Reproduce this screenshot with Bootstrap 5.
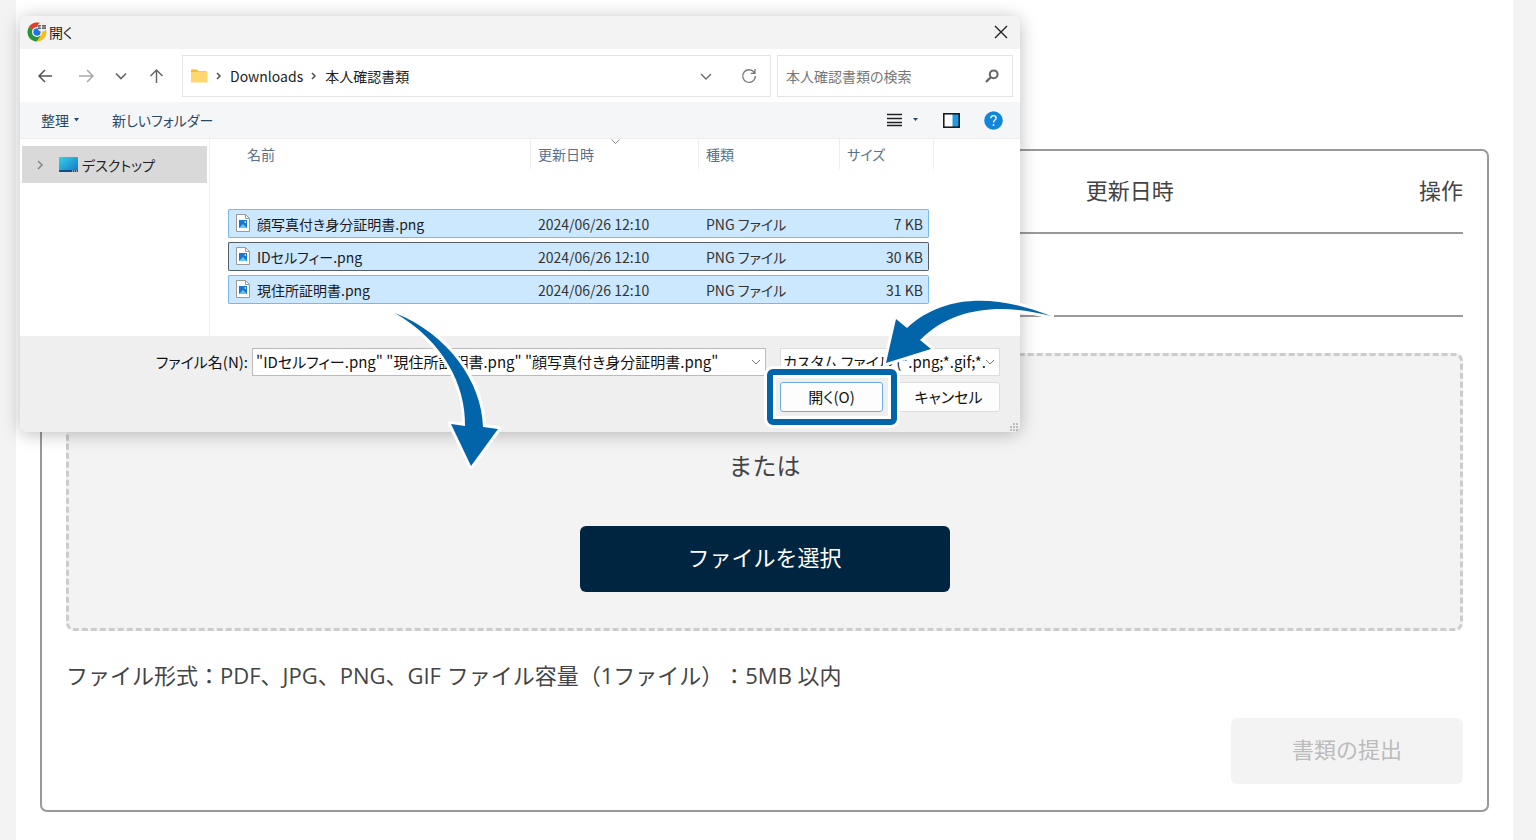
<!DOCTYPE html>
<html lang="ja">
<head>
<meta charset="utf-8">
<meta name="viewport" content="width=device-width, initial-scale=1">
<title>書類の提出</title>
<link href="https://cdn.jsdelivr.net/npm/bootstrap@5.3.0/dist/css/bootstrap.min.css" rel="stylesheet">
<style>
  body { background: #f3f3f3; color: #444; font-family: "Open Sans", "Noto Sans CJK JP", sans-serif; font-size: 22px; line-height: 32px; text-spacing-trim: space-all; }
  .page { background: #fff; margin: 0 23px 0 16px; padding: 149px 24px 28px 24px; min-height: 100vh; }
  .panel { border: 2px solid #999; border-radius: 7px; padding: 0 24px 26px; }
  .doc-table { width: 100%; table-layout: fixed; }
  .doc-table th { font-weight: 400; height: 82px; border-bottom: 2px solid #999; padding: 0 0 3px; }
  .doc-table th:first-child { width: 73%; }
  .doc-table td { height: 83px; border-bottom: 2px solid #999; }
  .drop-area { border: 3px dashed #ccc; border-radius: 8px; background: #f3f3f3; margin-top: 36px; height: 278px; padding-bottom: 36px; }
  .or-text { font-size: 24px; }
  .pick-btn, .send-btn { height: 66px; border: 0; border-radius: 6px; padding: 0 0 4px; }
  .pick-btn { width: 370px; background: #002540; color: #fff; margin-top: 44px; }
  .send-btn { width: 232px; background: #f3f3f3; color: #bbb; margin-top: 27px; }

  .dialog { position: absolute; left: 20px; top: 16px; width: 1000px; max-width: 100%; border-radius: 8px; background: #fff; box-shadow: 0 2px 18px rgba(0,0,0,.26); color: #222; font-family: "Noto Sans CJK JP", sans-serif; font-size: 14px; line-height: 20px; font-feature-settings: "palt"; }
  .dialog svg { flex: none; }
  .dialog button, .dialog input, .dialog select { font-size: 14px; line-height: 20px; font-feature-settings: inherit; }
  .plain { border: 0; background: none; padding: 0; color: inherit; display: flex; align-items: center; }
  .title-bar { height: 33px; background: #f3f3f3; border-radius: 8px 8px 0 0; padding: 0 12px 2px 7px; gap: 2px; }
  .nav-bar { height: 53px; padding: 0 7px 0 16px; }
  .address { width: 589px; height: 42px; border: 1px solid #e4e4e4; padding: 0 13px 0 8px; margin-left: 16px; }
  .crumbs { gap: 7px; }
  .search { height: 42px; border: 1px solid #e4e4e4; padding: 0 13px 0 8px; margin-left: 6px; }
  .search input { border: 0; outline: 0; padding: 0; min-width: 0; background: none; }
  .search input::placeholder { color: #777; opacity: 1; }
  .tool-bar { height: 37px; background: #f5f6f8; border-bottom: 1px solid #eceef0; padding: 0 17px 0 21px; color: #2c4866; }
  .files-body { height: 197px; }
  .side { width: 190px; border-right: 1px solid #f1f1f1; padding: 7px 2px 0; }
  .side button { width: 185px; height: 37px; background: #d9d9d9; padding-left: 14px; gap: 2px; }
  .files { width: 701px; margin-left: 18px; table-layout: fixed; border-collapse: separate; border-spacing: 0 4px; margin-top: -4px; }
  .files th { font-weight: 400; color: #5a6f8a; height: 30px; border-right: 1px solid #eee; padding: 0 0 0 7px; position: relative; }
  .files th:first-child { padding-left: 19px; }
  .files th:last-child { border-right: 0; }
  .files th:last-child::after { content: ""; position: absolute; right: -5px; top: 0; bottom: 0; border-right: 1px solid #eee; }
  .files .gap-row td { height: 32px; padding: 0; }
  .files .file td { height: 29px; background: #cce8ff; border: solid #78b9ea; border-width: 1px 0; padding: 0 5px 0 7px; color: #333; }
  .files .file td:first-child { border-left-width: 1px; border-radius: 2px 0 0 2px; color: #1a1a1a; }
  .files .file td:last-child { border-right-width: 1px; border-radius: 0 2px 2px 0; }
  .files .file.current td { border-color: #555f68; }
  .file-name { gap: 7px; }
  .file-name svg { margin-bottom: 2px; }
  .sort-mark { position: absolute; left: 80px; top: 0; }
  .dialog-foot { height: 96px; background: #efefef; border-radius: 0 0 8px 8px; padding: 12px 20px 0; position: relative; color: #111; }
  .dialog .dialog-foot :is(label, input, select, button) { font-size: 15px; color: #111; }
  .dialog-foot label { width: 208px; }
  .combo { height: 28px; border: 1px solid #bbb; background: #fff; }
  .combo input { border: 0; outline: 0; padding: 0 0 0 3px; min-width: 0; }
  .combo.kind { width: 220px; border-color: #ddd; margin-left: 14px; }
  .kind select { appearance: none; border: 0; background: none; flex: 1; min-width: 0; padding: 0 0 0 2px; }
  .foot-actions { gap: 14px; margin-top: 6px; }
  .dialog-foot .act { width: 103px; height: 30px; border: 1px solid #ddd; border-radius: 3px; background: #fdfdfd; padding: 0; }
  .dialog-foot .open-btn { border-color: #6cace4; }
  .grip { position: absolute; right: 2px; bottom: 1px; }
  .pointers { position: absolute; left: 0; top: 0; pointer-events: none; }
</style>
</head>
<body class="position-relative">
<main class="page">
  <section class="panel">
    <table class="doc-table">
      <thead><tr><th></th><th>更新日時</th><th class="text-end">操作</th></tr></thead>
      <tbody><tr><td colspan="3"></td></tr></tbody>
    </table>
    <div class="drop-area d-flex flex-column align-items-center justify-content-end">
      <div class="or-text">または</div>
      <button type="button" class="pick-btn">ファイルを選択</button>
    </div>
    <p class="mb-0 mt-4 pt-1">ファイル形式：PDF、JPG、PNG、GIF ファイル容量（1ファイル）：5MB 以内</p>
    <div class="d-flex justify-content-end"><button type="button" class="send-btn" disabled>書類の提出</button></div>
  </section>
</main>

<div class="dialog" role="dialog">
  <div class="title-bar d-flex align-items-center">
    <svg width="20" height="20" viewBox="0 0 20 20"><circle cx="10" cy="10" r="9.5" fill="#fbbc17"/><path d="M10 10 1.8 5.2A9.5 9.5 0 0 1 18.2 5.2L10 5.5Z" fill="#e33b2e"/><path d="M1.8 5.2 10 10l3.500 4L9.500 19.500A9.500 9.500 0 0 1 1.800 5.200Z" fill="#249443"/><circle cx="10" cy="10" r="5" fill="#fff"/><circle cx="10" cy="10" r="3.700" fill="#256fe8"/><circle cx="15" cy="5" r="4.600" fill="#eee"/><path d="M11 3.500h3m1 0h4M11 5h3m1 0h4M11 6.500h3m1 0h4M12 3v4m4-4v4m2-4v4" stroke="#444" stroke-width=".7"/></svg>
    <span>開く</span>
    <button type="button" class="plain ms-auto"><svg width="14" height="14" viewBox="0 0 14 14"><path d="m1 1 12 12M13 1 1 13" stroke="#222" stroke-width="1.400"/></svg></button>
  </div>
  <div class="nav-bar d-flex align-items-center">
    <button type="button" class="plain"><svg width="18" height="18" viewBox="0 0 18 18" fill="none" stroke="#555" stroke-width="1.500"><path d="M16 9H3m6-6L3 9l6 6"/></svg></button>
    <button type="button" class="plain ms-4"><svg width="18" height="18" viewBox="0 0 18 18" fill="none" stroke="#aaa" stroke-width="1.500"><path d="M1 9h13M9 3l6 6-6 6"/></svg></button>
    <button type="button" class="plain ms-3"><svg width="18" height="18" viewBox="0 0 18 18" fill="none" stroke="#666" stroke-width="1.700"><path d="m4 6.500 5 5 5-5"/></svg></button>
    <button type="button" class="plain ms-3"><svg width="20" height="18" viewBox="0 0 20 18" fill="none" stroke="#666" stroke-width="1.500"><path d="M10.500 16V3m-6 6 6-6 6 6"/></svg></button>
    <div class="address d-flex align-items-center">
      <div class="crumbs d-flex align-items-center">
        <svg width="17" height="14" viewBox="0 0 18 14"><path d="M1 0h5l2 2h8q1 0 1 1v3H0V1Q0 0 1 0Z" fill="#f5b62c"/><rect y="2.500" width="17.500" height="11.500" rx="1" fill="#ffd76c"/></svg>
        <svg width="8" height="12" viewBox="0 0 8 12" fill="none" stroke="#555" stroke-width="1.600"><path d="m2 3 3 3-3 3"/></svg>
        <span>Downloads</span>
        <svg width="8" height="12" viewBox="0 0 8 12" fill="none" stroke="#555" stroke-width="1.600"><path d="m2 3 3 3-3 3"/></svg>
        <span>本人確認書類</span>
      </div>
      <button type="button" class="plain ms-auto"><svg width="14" height="14" viewBox="0 0 14 14" fill="none" stroke="#666" stroke-width="1.300"><path d="m2 5 5 5 5-5"/></svg></button>
      <button type="button" class="plain ms-4 ps-1"><svg width="16" height="16" viewBox="0 0 16 16" fill="none" stroke="#777" stroke-width="1.300"><path d="M13.500 5A6.300 6.300 0 1 0 14.300 8M14 1v4.300H9.700"/></svg></button>
    </div>
    <div class="search d-flex align-items-center flex-grow-1">
      <input type="text" class="flex-grow-1" placeholder="本人確認書類の検索">
      <svg width="14" height="14" viewBox="0 0 14 14" fill="none" stroke="#666"><circle cx="8.700" cy="5.300" r="3.900" stroke-width="2"/><path d="M5.800 8.200 1 13" stroke-width="2.300"/></svg>
    </div>
  </div>
  <div class="tool-bar d-flex align-items-center">
    <button type="button" class="plain">整理<svg class="ms-1" width="7" height="4" viewBox="0 0 7 4"><path d="M1 0h5L3.500 3.500Z" fill="#2c4866"/></svg></button>
    <button type="button" class="plain ms-4 ps-2">新しいフォルダー</button>
    <button type="button" class="plain ms-auto"><svg width="15" height="14" viewBox="0 0 15 14"><path d="M0 1.500h15M0 5.500h15M0 9.500h15M0 12.500h15" stroke="#222" stroke-width="1.300"/></svg><svg class="ms-2 me-4" width="9" height="4" viewBox="0 0 9 4"><path d="M3 0h5L5.500 3Z" fill="#2c4866"/></svg></button>
    <button type="button" class="plain me-4"><svg width="17" height="15" viewBox="0 0 17 15"><rect x="1" y="1" width="15" height="13" fill="#fff"/><path d="M9.500 1H16v13H9.500Z" fill="#1e9be4"/><rect x=".8" y=".8" width="15.400" height="13.400" fill="none" stroke="#111" stroke-width="1.500"/></svg></button>
    <button type="button" class="plain"><svg width="19" height="19" viewBox="0 0 19 19"><circle cx="9.500" cy="9.500" r="9.300" fill="#1187dc"/><path d="M6.800 7.200Q7 4.700 9.500 4.700T12.200 7.100C12.200 9 9.500 9 9.500 11.400" fill="none" stroke="#fff" stroke-width="1.300"/><circle cx="9.500" cy="14" r=".9" fill="#fff"/></svg></button>
  </div>
  <div class="files-body d-flex align-items-start">
    <div class="side align-self-stretch">
      <button type="button" class="plain"><svg width="9" height="12" viewBox="0 0 9 12" fill="none" stroke="#888" stroke-width="1.600"><path d="m2 2 4 4-4 4"/></svg>
      <svg class="ms-2 me-0" width="25" height="15" viewBox="-4 0 25 15"><defs><linearGradient id="desk" x2="1" y2="1"><stop stop-color="#35d3e6"/><stop offset="1" stop-color="#1473c8"/></linearGradient></defs><rect width="19" height="15" rx="1" fill="url(#desk)"/><path d="M0 13h19v1q0 1-1 1H1q-1 0-1-1Z" fill="#0d4f86"/><path d="M13 14h1m1 0h1m1 0h1" stroke="#fff"/></svg>デスクトップ</button>
    </div>
    <table class="files">
      <colgroup><col style="width:303px"><col style="width:168px"><col style="width:141px"><col></colgroup>
      <thead><tr><th>名前</th><th>更新日時<svg class="sort-mark" width="9" height="6" viewBox="0 0 9 6" fill="none" stroke="#888"><path d="m.5.5 4 4 4-4"/></svg></th><th>種類</th><th>サイズ</th></tr></thead>
      <tbody>
        <tr class="gap-row"><td colspan="4"></td></tr>
        <tr class="file"><td><div class="file-name d-flex align-items-center"><svg width="14" height="18" viewBox="0 0 14 18"><path d="M.5.5h9l4 4v13H.5Z" fill="#fff" stroke="#999"/><path d="M9.500.5v4h4" fill="none" stroke="#999"/><path d="M3 6h8v8H3Z" fill="#1878d0"/><path d="m3 14 4-4 4 4Z" fill="#5cc8f5"/><path d="m8 8 2-1v2Z" fill="#fff"/></svg>顔写真付き身分証明書.png</div></td><td>2024/06/26 12:10</td><td>PNG ファイル</td><td class="text-end">7 KB</td></tr>
        <tr class="file current"><td><div class="file-name d-flex align-items-center"><svg width="14" height="18" viewBox="0 0 14 18"><path d="M.5.5h9l4 4v13H.5Z" fill="#fff" stroke="#999"/><path d="M9.500.5v4h4" fill="none" stroke="#999"/><path d="M3 6h8v8H3Z" fill="#1878d0"/><path d="m3 14 4-4 4 4Z" fill="#5cc8f5"/><path d="m8 8 2-1v2Z" fill="#fff"/></svg>IDセルフィー.png</div></td><td>2024/06/26 12:10</td><td>PNG ファイル</td><td class="text-end">30 KB</td></tr>
        <tr class="file"><td><div class="file-name d-flex align-items-center"><svg width="14" height="18" viewBox="0 0 14 18"><path d="M.5.5h9l4 4v13H.5Z" fill="#fff" stroke="#999"/><path d="M9.500.5v4h4" fill="none" stroke="#999"/><path d="M3 6h8v8H3Z" fill="#1878d0"/><path d="m3 14 4-4 4 4Z" fill="#5cc8f5"/><path d="m8 8 2-1v2Z" fill="#fff"/></svg>現住所証明書.png</div></td><td>2024/06/26 12:10</td><td>PNG ファイル</td><td class="text-end">31 KB</td></tr>
      </tbody>
    </table>
  </div>
  <div class="dialog-foot">
    <div class="d-flex align-items-center">
      <label for="fname" class="text-end">ファイル名(N):</label>
      <div class="combo d-flex align-items-center flex-grow-1 ms-1 pe-1">
        <input id="fname" type="text" class="flex-grow-1" value='"IDセルフィー.png" "現住所証明書.png" "顔写真付き身分証明書.png"'>
        <svg width="10" height="8" viewBox="0 0 10 8" fill="none" stroke="#777"><path d="m1 2 4 4 4-4"/></svg>
      </div>
      <div class="combo kind d-flex align-items-center pe-1">
        <select><option>カスタム ファイル (*.png;*.gif;*.p</option></select>
        <svg width="10" height="8" viewBox="0 0 10 8" fill="none" stroke="#777"><path d="m1 2 4 4 4-4"/></svg>
      </div>
    </div>
    <div class="foot-actions d-flex justify-content-end"><button type="button" class="act open-btn">開く(O)</button><button type="button" class="act">キャンセル</button></div>
    <svg class="grip" width="8" height="8" viewBox="0 0 8 8" fill="#bbb"><path d="M3 0h2v2H3ZM6 0h2v2H6ZM0 3h2v2H0ZM3 3h2v2H3ZM6 3h2v2H6ZM0 6h2v2H0ZM3 6h2v2H3ZM6 6h2v2H6Z"/></svg>
  </div>
</div>

<svg class="pointers" width="1060" height="480" viewBox="0 0 1060 480" fill="#0365a9" stroke="#fff" stroke-width="6" stroke-linejoin="round" paint-order="stroke">
  <path d="M395 313C448 334 482 382 483 427L498 429 471 466 451 424 465 426C466 385 443 341 395 313Z"/>
  <rect x="770" y="372" width="124" height="50" rx="3" fill="none" stroke-width="12"/>
  <rect x="770" y="372" width="124" height="50" rx="3" fill="none" stroke="#0365a9"/>
  <path d="M1051 316C1006 304 955 305 920 340L931 349 886 363 896 319 907 328C945 293 998 295 1051 316Z"/>
</svg>
<script src="https://cdn.jsdelivr.net/npm/bootstrap@5.3.0/dist/js/bootstrap.bundle.min.js"></script>
</body>
</html>
